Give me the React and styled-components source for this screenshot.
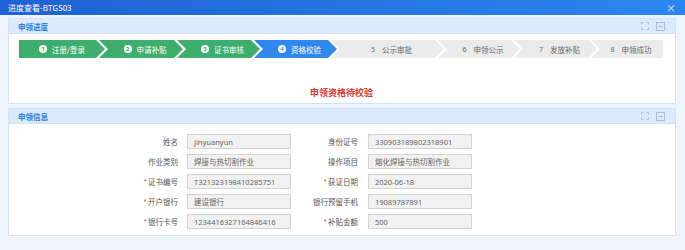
import React from "react";
import styled, { createGlobalStyle } from "styled-components";

const Global = createGlobalStyle`
  html, body { margin: 0; padding: 0; }
  *, *::before, *::after { box-sizing: border-box; }
  body { font-family: "Noto Sans", "Noto Sans CJK SC", sans-serif; background: #eef4fb; }
`;

const Window = styled.div`
  width: 685px;
  height: 250px;
  background: #eef4fb;
  display: flex;
  flex-direction: column;
  overflow: hidden;
`;

const TitleBar = styled.div`
  height: 15px;
  flex: none;
  display: flex;
  align-items: center;
  justify-content: space-between;
  padding: 0 9px 0 8px;
  background: linear-gradient(to right, #1d62d2, #2c86ee);
  color: #fff;
  font-size: 8px;
  font-family: "Noto Sans CJK SC", sans-serif;
`;

const Close = styled.span`
  font-size: 10px;
  line-height: 1;
  opacity: 0.85;
`;

const Content = styled.div`
  display: flex;
  flex-direction: column;
  gap: 4px;
  padding: 3px 9px 0 8px;
`;

const Panel = styled.section`
  background: #fff;
  border: 1px solid #d3e3f6;
  display: flex;
  flex-direction: column;
`;

const PanelHeader = styled.div`
  height: 15px;
  background: #dbeafc;
  border-bottom: 1px solid #cfe1f7;
  display: flex;
  align-items: center;
  justify-content: space-between;
  padding: 0 10px 0 9px;
  color: #2f7ae0;
  font-size: 7.5px;
  font-weight: 600;
  font-family: "Noto Sans CJK SC", sans-serif;
`;

const Tools = styled.div`
  display: flex;
  align-items: center;
  gap: 7px;
  color: #a9bfdb;
`;

const ProgressBody = styled.div`
  height: 69px;
  padding: 6px 11px 0 10px;
  display: flex;
  flex-direction: column;
  align-items: stretch;
`;

const Steps = styled.div`
  display: flex;
  height: 18px;
`;

const Step = styled.div`
  flex: none;
  width: ${(p) => p.$w}px;
  height: 18px;
  margin-left: ${(p) => (p.$first ? 0 : -6)}px;
  padding-left: ${(p) => (p.$first ? 0 : 8)}px;
  display: flex;
  align-items: center;
  justify-content: center;
  gap: 5px;
  font-size: 7.5px;
  font-family: "Noto Sans CJK SC", sans-serif;
  background: ${(p) =>
    p.$state === "done" ? "#3dae6c" : p.$state === "active" ? "#2f88ee" : "#ebebeb"};
  color: ${(p) => (p.$state === "todo" ? "#666" : "#fff")};
  clip-path: ${(p) =>
    p.$first
      ? "polygon(0 0, calc(100% - 9px) 0, 100% 50%, calc(100% - 9px) 100%, 0 100%)"
      : p.$last
      ? "polygon(0 0, 100% 0, 100% 100%, 0 100%, 9px 50%)"
      : "polygon(0 0, calc(100% - 9px) 0, 100% 50%, calc(100% - 9px) 100%, 0 100%, 9px 50%)"};
`;

const Num = styled.span`
  width: 8px;
  height: 8px;
  border-radius: 50%;
  background: #fff;
  color: ${(p) => (p.$state === "active" ? "#2f88ee" : "#3dae6c")};
  font-size: 6px;
  font-weight: 700;
  display: inline-flex;
  align-items: center;
  justify-content: center;
  font-family: "Noto Sans", sans-serif;
`;

const PlainNum = styled.span`
  font-family: "Noto Sans", sans-serif;
  font-size: 7px;
  margin-right: 2px;
`;

const Status = styled.div`
  margin-top: 29px;
  line-height: 12px;
  text-align: center;
  color: #e23434;
  font-size: 9px;
  font-weight: 700;
  font-family: "Noto Sans CJK SC", sans-serif;
`;

const InfoBody = styled.div`
  padding: 10px 0 6px 79px;
`;

const Grid = styled.div`
  display: grid;
  grid-template-columns: 99px 104px 77px 104px;
  grid-auto-rows: 15px;
  row-gap: 5px;
`;

const Label = styled.div`
  display: flex;
  align-items: center;
  justify-content: flex-end;
  padding-right: ${(p) => p.$pr}px;
  font-size: 7.5px;
  color: #555;
  font-family: "Noto Sans CJK SC", sans-serif;
  white-space: nowrap;
`;

const Req = styled.span`
  color: #e23434;
  margin-right: 1px;
`;

const Field = styled.div`
  border: 1px solid #d4d4d4;
  background: #f1f1f1;
  display: flex;
  align-items: center;
  padding-left: 6px;
  font-size: 7.5px;
  color: #666;
  font-family: "Noto Sans", "Noto Sans CJK SC", sans-serif;
  white-space: nowrap;
  overflow: hidden;
`;

const ExpandIcon = () => (
  <svg width="8" height="8" viewBox="0 0 8 8" fill="none" stroke="currentColor" strokeWidth="1">
    <path d="M0.5 2.5V0.5H2.5M5.5 0.5H7.5V2.5M7.5 5.5V7.5H5.5M2.5 7.5H0.5V5.5" />
  </svg>
);

const MinIcon = () => (
  <svg width="9" height="9" viewBox="0 0 9 9" fill="none" stroke="currentColor" strokeWidth="1">
    <rect x="0.5" y="0.5" width="8" height="8" />
    <path d="M2.5 4.5H6.5" />
  </svg>
);

const steps = [
  { n: 1, t: "注册/登录", w: 86, s: "done" },
  { n: 2, t: "申请补贴", w: 84, s: "done" },
  { n: 3, t: "证书审核", w: 83, s: "done" },
  { n: 4, t: "资格校验", w: 83, s: "active" },
  { n: 5, t: "公示审批", w: 113, s: "todo" },
  { n: 6, t: "申领公示", w: 82, s: "todo" },
  { n: 7, t: "发放补贴", w: 83, s: "todo" },
  { n: 8, t: "申领成功", w: 72, s: "todo" },
];

const rows = [
  [{ l: "姓名", v: "jinyuanyun" }, { l: "身份证号", v: "330903189802318901" }],
  [{ l: "作业类别", v: "焊接与热切割作业" }, { l: "操作项目", v: "熔化焊接与热切割作业" }],
  [{ l: "证书编号", v: "T321323198410285751", r: true }, { l: "获证日期", v: "2020-06-18", r: true }],
  [{ l: "开户银行", v: "建设银行", r: true }, { l: "银行预留手机", v: "19089787891" }],
  [{ l: "银行卡号", v: "1234416327164846416", r: true }, { l: "补贴金额", v: "500", r: true }],
];

const PanelHead = ({ title }) => (
  <PanelHeader>
    <span>{title}</span>
    <Tools>
      <ExpandIcon />
      <MinIcon />
    </Tools>
  </PanelHeader>
);

export default function App() {
  return (
    <Window>
      <Global />
      <TitleBar>
        <span>进度查看-BTGS03</span>
        <Close>×</Close>
      </TitleBar>
      <Content>
        <Panel>
          <PanelHead title="申领进度" />
          <ProgressBody>
            <Steps>
              {steps.map((st, i) => (
                <Step key={st.n} $w={st.w} $state={st.s} $first={i === 0} $last={i === steps.length - 1}>
                  {st.s === "todo" ? (
                    <PlainNum>{st.n}</PlainNum>
                  ) : (
                    <Num $state={st.s}>{st.n}</Num>
                  )}
                  <span>{st.t}</span>
                </Step>
              ))}
            </Steps>
            <Status>申领资格待校验</Status>
          </ProgressBody>
        </Panel>
        <Panel>
          <PanelHead title="申领信息" />
          <InfoBody>
            <Grid>
              {rows.map((row, ri) =>
                row.map((f, fi) => (
                  <React.Fragment key={`${ri}-${fi}`}>
                    <Label $pr={fi === 0 ? 9 : 10}>
                      {f.r && <Req>*</Req>}
                      {f.l}
                    </Label>
                    <Field>{f.v}</Field>
                  </React.Fragment>
                ))
              )}
            </Grid>
          </InfoBody>
        </Panel>
      </Content>
    </Window>
  );
}
